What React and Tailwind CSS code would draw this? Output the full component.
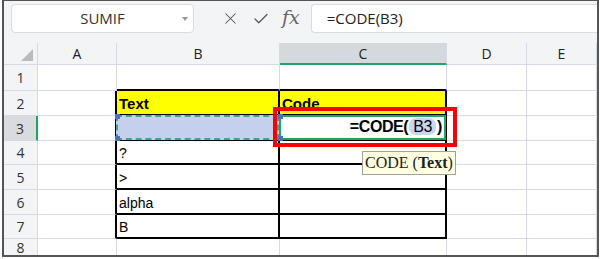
import { X, Check } from 'lucide-react';

const cols = ['A', 'B', 'C', 'D', 'E'];
const rowH = ['h-[26px]', 'h-[25px]', 'h-[25px]', 'h-[24px]', 'h-[25px]', 'h-[25px]', 'h-[24px]', 'h-[18px]'];
const colW = ['w-[79px]', 'w-[163px]', 'w-[167px]', 'w-[80px]', 'flex-1'];
const bText = { 2: 'Text', 4: '?', 5: '>', 6: 'alpha', 7: 'B' };

function Cell({ r, c }) {
  const inTable = r >= 2 && r <= 7 && (c === 1 || c === 2);
  let border = 'border-r border-b border-[#d5dae6]';
  if (inTable) border = 'border-r-2 border-b-2 border-black';
  else if (c === 0 && r >= 2 && r <= 7) border = 'border-r-2 border-r-black border-b border-b-[#d5dae6]';
  else if (r === 1 && (c === 1 || c === 2)) border = 'border-r border-r-[#d5dae6] border-b-2 border-b-black';
  const yellow = r === 2 && inTable ? 'bg-[#ffff00]' : 'bg-white';

  return (
    <div className={`relative shrink-0 ${colW[c]} ${border} ${yellow} flex items-end pl-[2px] pb-[1px]`}>
      {c === 1 && bText[r] && (
        <span className={`text-[14px] leading-[18px] text-black ${r === 2 ? 'font-bold text-[15px]' : ''}`}>{bText[r]}</span>
      )}
      {c === 2 && r === 2 && <span className="font-bold text-[15px] leading-[18px] text-black">Code</span>}
      {c === 1 && r === 3 && (
        <div className="absolute inset-[-1px] bg-[#c5d0ee] border-2 border-dashed border-[#3fa68e]">
          <span className="absolute -left-[3px] -top-[3px] w-[5px] h-[5px] bg-[#4a72c4]" />
          <span className="absolute -left-[3px] -bottom-[3px] w-[5px] h-[5px] bg-[#4a72c4]" />
        </div>
      )}
      {c === 2 && r === 3 && (
        <>
          <div className="absolute inset-[-1px] border-2 border-[#21a366] flex items-end justify-end pr-[2px] pb-[1px]">
            <span className="font-bold text-[16px] leading-[20px] text-black tracking-tight">
              =CODE(<span className="bg-[#c9d6f2] rounded-[7px] px-[4px] mx-[1px] font-normal">B3</span>)
            </span>
            <span className="absolute -left-[3px] -top-[3px] w-[5px] h-[5px] bg-[#4a72c4]" />
            <span className="absolute -left-[3px] -bottom-[3px] w-[5px] h-[5px] bg-[#4a72c4]" />
          </div>
          <div className="absolute z-20 -left-[7px] -right-[12px] -top-[9px] -bottom-[8px] border-4 border-[#ff0000]" />
          <div className="absolute z-30 left-[82px] top-[35px] h-[24px] w-[94px] bg-[#ffffe1] border border-[#a0a0a0] px-[2px] flex items-center font-['Liberation_Serif',serif] text-[16px] text-[#222] whitespace-nowrap">
            CODE (<b>Text</b>)
          </div>
        </>
      )}
    </div>
  );
}

export default function App() {
  return (
    <div className="w-[600px] h-[259px] bg-white font-['Liberation_Sans',Arial,sans-serif]">
      <div className="ml-[2px] w-[597px] h-[257px] border-l-2 border-r-2 border-b-2 border-t border-[#555] bg-[#f3f4f6] flex flex-col overflow-hidden">
        {/* Toolbar */}
        <div className="h-[42px] shrink-0 flex items-start pt-[3px] pl-[7px] font-['Open_Sans',sans-serif]">
          <div className="w-[183px] h-[29px] bg-white border border-[#dcdcdc] rounded-[4px] relative flex items-center justify-center text-[15px] text-[#333]">
            SUMIF
            <span className="absolute right-[5px] top-[12px] w-0 h-0 border-l-[3px] border-r-[3px] border-t-[4px] border-l-transparent border-r-transparent border-t-[#999]" />
          </div>
          <div className="flex items-center h-[29px] ml-[27px] gap-[12px] text-[#555]">
            <X size={19} strokeWidth={1.3} />
            <Check size={18} strokeWidth={1.6} />
            <span className="font-['DejaVu_Serif',serif] italic text-[19px] leading-none text-[#666] -mt-[2px]">fx</span>
          </div>
          <div className="ml-[11px] flex-1 h-[29px] bg-white border border-[#dcdcdc] rounded-l-[4px] border-r-0 flex items-center pl-[15px] text-[15px] text-[#222]">
            =CODE(B3)
          </div>
        </div>
        {/* Column headers */}
        <div className="h-[22px] shrink-0 flex font-['Open_Sans',sans-serif] text-[14px] text-[#222]">
          <div className="w-[34px] shrink-0 border-r border-b border-[#d5dae6] relative">
            <span className="absolute right-[4px] bottom-[3px] w-0 h-0 border-b-[12px] border-l-[12px] border-b-[#bbbbbb] border-l-transparent" />
          </div>
          {cols.map((c, i) => (
            <div
              key={c}
              className={`shrink-0 ${colW[i]} flex items-center justify-center border-r ${
                c === 'C' ? 'bg-[#d5d8dd] border-b-2 border-b-[#21a366] border-r-[#d5dae6]' : 'border-b border-[#d5dae6]'
              }`}
            >
              {c}
            </div>
          ))}
        </div>
        {/* Rows */}
        {rowH.map((h, idx) => {
          const r = idx + 1;
          return (
            <div key={r} className={`${h} shrink-0 flex ${r === 8 ? 'flex-1' : ''}`}>
              <div
                className={`w-[34px] shrink-0 flex items-center justify-center font-['Open_Sans',sans-serif] text-[14px] text-[#333] border-b border-[#d5dae6] ${
                  r === 3 ? 'bg-[#d9dbde] border-r-2 border-r-[#21a366]' : 'border-r'
                }`}
              >
                {r}
              </div>
              {cols.map((c, i) => (
                <Cell key={c} r={r} c={i} />
              ))}
            </div>
          );
        })}
      </div>
    </div>
  );
}
